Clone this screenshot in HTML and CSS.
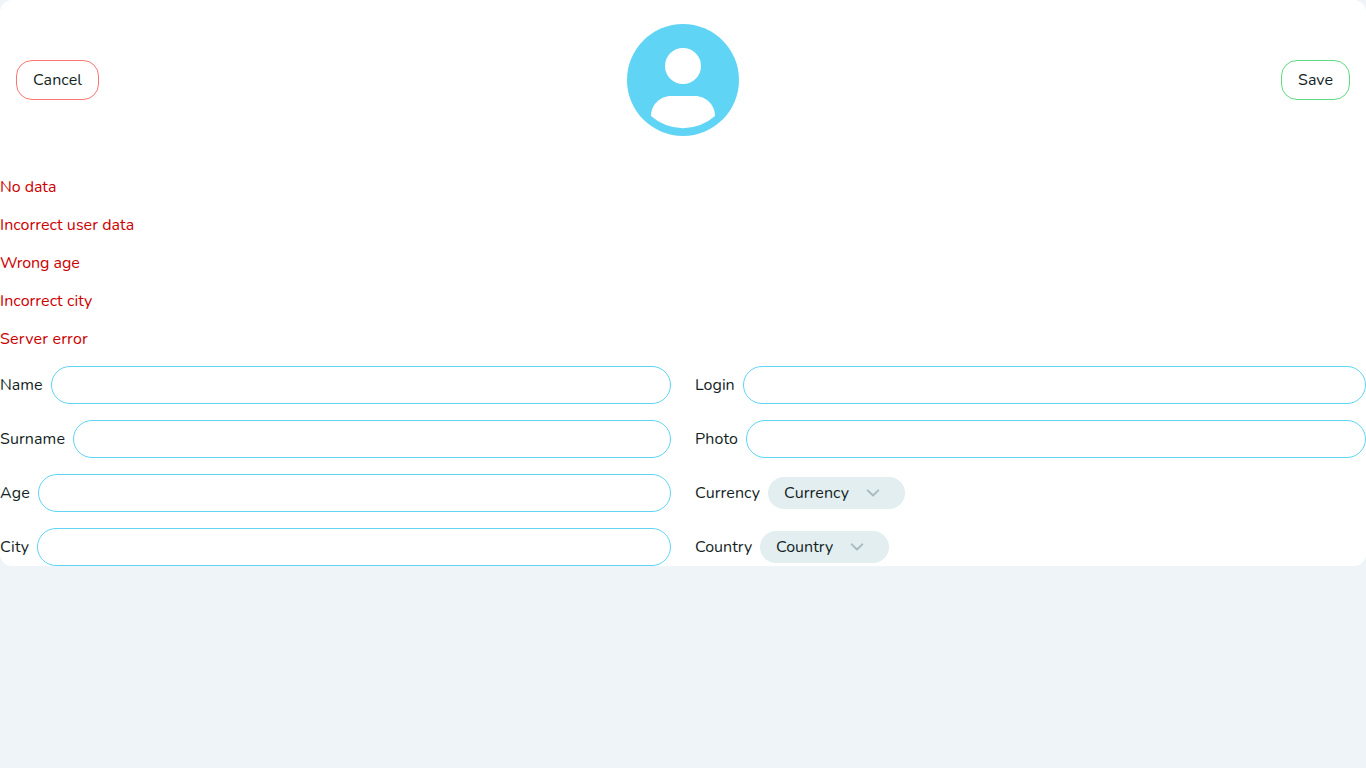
FILE: index.html
```html
<!DOCTYPE html>
<html lang="en">
<head>
<meta charset="utf-8">
<title>Edit profile</title>
<link rel="stylesheet" href="styles.css">
</head>
<body>
<form class="card">
  <header class="top">
    <button type="button" class="btn btn-cancel"><span class="t-cancel">Cancel</span></button>
    <svg class="avatar" viewBox="0 0 112 112">
      <circle cx="56" cy="56" r="56" fill="#5fd4f5"/>
      <circle cx="56" cy="42" r="18" fill="#fff"/>
      <path d="M24 92C24 81 33 72 44 72H68C79 72 88 81 88 92A48 48 0 0 1 24 92Z" fill="#fff"/>
    </svg>
    <button type="button" class="btn btn-save"><span class="t-save">Save</span></button>
  </header>
  <div class="errors">
    <p class="e-nodata">No data</p>
    <p class="e-user">Incorrect user data</p>
    <p class="e-age">Wrong age</p>
    <p class="e-city">Incorrect city</p>
    <p class="e-server">Server error</p>
  </div>
  <div class="fields">
    <div class="column">
      <label class="field"><span class="t-name">Name</span><input class="input"></label>
      <label class="field"><span class="t-surname">Surname</span><input class="input"></label>
      <label class="field"><span class="t-age">Age</span><input class="input"></label>
      <label class="field"><span class="t-city">City</span><input class="input"></label>
    </div>
    <div class="column">
      <label class="field"><span class="t-login">Login</span><input class="input"></label>
      <label class="field"><span class="t-photo">Photo</span><input class="input"></label>
      <div class="field"><span class="t-currency">Currency</span>
        <div class="select"><span class="t-currency">Currency</span><svg class="chevron" viewBox="0 0 16 16"><path d="M2.7 5.4L8 10.5L13.3 5.4"/></svg></div>
      </div>
      <div class="field"><span class="t-country">Country</span>
        <div class="select"><span class="t-country">Country</span><svg class="chevron" viewBox="0 0 16 16"><path d="M2.7 5.4L8 10.5L13.3 5.4"/></svg></div>
      </div>
    </div>
  </div>
</form>
</body>
</html>
```
FILE: styles.css
```css
* { box-sizing: border-box; }
body {
  margin: 0;
  background: #eef4f7;
  color: #141f24;
  font: 16px/22px Nunito, Lato, sans-serif;
}
.card {
  height: 566px;
  background: #fff;
  border-radius: 12px;
}
.top {
  display: flex;
  align-items: center;
  justify-content: space-between;
  position: relative;
  height: 160px;
  padding: 0 16px;
}
.avatar {
  position: absolute;
  left: 50%;
  top: 24px;
  width: 112px;
  height: 112px;
  transform: translateX(-50%);
}
.btn {
  height: 40px;
  padding: 0 16px;
  border: 1px solid;
  border-radius: 16px;
  background: #fff;
  font: inherit;
}
.btn span { color: #141f24; }
.btn-cancel { border-color: #fc7573; }
.btn-save { border-color: #60d982; }
.errors { padding-top: 16px; color: #cc0000; }
.errors p { margin: 0 0 16px; }
.e-nodata, .e-age { letter-spacing: -0.06px; }
.e-user { letter-spacing: 0.05px; }
.e-city { letter-spacing: 0.06px; }
.e-server { letter-spacing: 0.2px; }
.fields {
  display: grid;
  grid-template-columns: 1fr 1fr;
  gap: 24px;
}
.column {
  display: flex;
  flex-direction: column;
  gap: 16px;
}
.field {
  display: flex;
  align-items: center;
  gap: 8px;
  height: 38px;
}
.field span, .btn span { display: block; flex: none; white-space: nowrap; }
.t-cancel { width: 49px; letter-spacing: 0.08px; }
.t-save { width: 35px; }
.field .t-name { width: 43px; }
.field .t-surname { width: 65px; letter-spacing: 0.1px; }
.field .t-age { width: 30px; letter-spacing: 0.1px; }
.field .t-city { width: 29px; letter-spacing: 0.2px; }
.field .t-login { width: 40px; }
.field .t-photo { width: 43px; letter-spacing: 0.12px; }
.field .t-currency { width: 65px; letter-spacing: 0.1px; }
.field .t-country { width: 57px; }
.input {
  flex: 1;
  min-width: 0;
  height: 38px;
  padding: 0 16px;
  border: 1px solid #5fd4f5;
  border-radius: 19px;
  background: #fff;
  font: inherit;
}
.select {
  display: flex;
  align-items: center;
  gap: 16px;
  height: 32px;
  padding: 0 24px 0 16px;
  border-radius: 16px;
  background: #e2eef0;
}
.chevron {
  width: 16px;
  height: 16px;
  fill: none;
  stroke: #aabbc0;
  stroke-width: 2;
  stroke-linecap: round;
  stroke-linejoin: round;
}
```
